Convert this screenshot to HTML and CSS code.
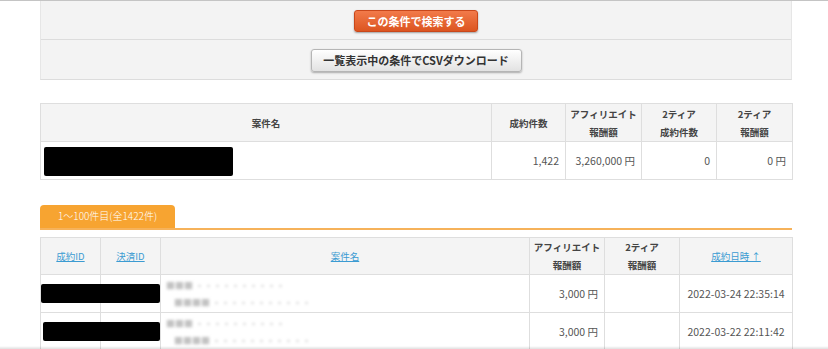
FILE: index.html
```html
<!DOCTYPE html>
<html lang="ja">
<head>
<meta charset="utf-8">
<link rel="stylesheet" href="styles.css">
</head>
<body>
<div class="topline"></div>
<div class="wrap">
  <div class="panel">
    <div class="panel-row"><button class="btn btn-orange">この条件で検索する</button></div>
    <div class="panel-row"><button class="btn btn-gray">一覧表示中の条件でCSVダウンロード</button></div>
  </div>

  <table class="tbl summary">
    <colgroup>
      <col style="width:451px"><col style="width:74px"><col style="width:76px"><col style="width:75px"><col style="width:76px">
    </colgroup>
    <thead>
      <tr>
        <th>案件名</th>
        <th>成約件数</th>
        <th>アフィリエイト<br>報酬額</th>
        <th>2ティア<br>成約件数</th>
        <th>2ティア<br>報酬額</th>
      </tr>
    </thead>
    <tbody>
      <tr>
        <td class="name"><span class="redact r1"></span></td>
        <td class="num">1,422</td>
        <td class="num">3,260,000 円</td>
        <td class="num">0</td>
        <td class="num">0 円</td>
      </tr>
    </tbody>
  </table>

  <div class="tabbar"><div class="tab">1〜100件目(全1422件)</div></div>

  <table class="tbl list">
    <colgroup>
      <col style="width:60px"><col style="width:60px"><col style="width:369px"><col style="width:75px"><col style="width:75px"><col style="width:113px">
    </colgroup>
    <thead>
      <tr>
        <th><a class="lnk">成約ID</a></th>
        <th><a class="lnk">決済ID</a></th>
        <th><a class="lnk">案件名</a></th>
        <th>アフィリエイト<br>報酬額</th>
        <th>2ティア<br>報酬額</th>
        <th><a class="lnk">成約日時 ↑</a></th>
      </tr>
    </thead>
    <tbody>
      <tr>
        <td class="idc"><span class="redact r2"></span></td>
        <td class="idc"></td>
        <td class="blur"><span class="b1">■■■ ・・・・・・・・・・</span><span class="b2">■■■■ ・・・・・・・・・・・</span></td>
        <td class="num">3,000 円</td>
        <td></td>
        <td class="date">2022-03-24 22:35:14</td>
      </tr>
      <tr>
        <td class="idc"><span class="redact r3"></span></td>
        <td class="idc"></td>
        <td class="blur"><span class="b1">■■■ ・・・・・・・・・・</span><span class="b2">■■■■ ・・・・・・・・・・・</span></td>
        <td class="num">3,000 円</td>
        <td></td>
        <td class="date">2022-03-22 22:11:42</td>
      </tr>
    </tbody>
  </table>
</div>
<div class="bottomshade"></div>
</body>
</html>
```

FILE: styles.css
```css
html, body {
  margin: 0;
  padding: 0;
  background: #fff;
  font-family: "Noto Sans CJK JP", "Noto Sans", sans-serif;
  color: #444;
  overflow: hidden;
  height: 349px;
}
.topline {
  height: 1px;
  background: #c4c4c4;
}
.wrap {
  width: 752px;
  margin-left: 40px;
  position: relative;
}
.panel {
  background: #f3f3f3;
  border-left: 1px solid #e6e6e6;
  border-right: 1px solid #e6e6e6;
  border-bottom: 1px solid #dcdcdc;
}
.panel-row {
  height: 38px;
  display: flex;
  align-items: center;
  justify-content: center;
}
.panel-row + .panel-row {
  border-top: 1px solid #dcdcdc;
  height: 39px;
}
.btn {
  font-family: "Noto Sans CJK JP", sans-serif;
  font-weight: bold;
  font-size: 11px;
  border-radius: 3px;
  padding: 0;
  cursor: pointer;
}
.btn-orange {
  width: 124px;
  height: 22px;
  margin-top: 1px;
  color: #fff;
  border: 1px solid #c9471a;
  background: linear-gradient(#f27a4a, #dc5520);
  box-shadow: 0 1px 2px rgba(0,0,0,0.35);
}
.btn-gray {
  width: 211px;
  height: 23px;
  margin-top: 1px;
  color: #333;
  border: 1px solid #b5b5b5;
  background: linear-gradient(#ffffff, #e2e2e2);
  box-shadow: 0 1px 2px rgba(0,0,0,0.3);
}
.tbl {
  border-collapse: collapse;
  table-layout: fixed;
  width: 752px;
  font-size: 10px;
}
.tbl th, .tbl td {
  border: 1px solid #dedede;
  padding: 0 6px;
  line-height: 14px;
}
.tbl th {
  background: #f4f4f4;
  font-weight: bold;
  color: #444;
  line-height: 18px;
  font-size: 9.5px;
  white-space: nowrap;
  padding: 0 2px;
}
.summary {
  margin-top: 23px;
}
.summary th { height: 37px; }
.summary td { height: 37px; }
.num {
  text-align: right;
  font-size: 10.5px;
  color: #555;
  white-space: nowrap;
}
.redact {
  display: block;
  background: #000;
  border-radius: 2px;
}
.r1 {
  width: 189px;
  height: 29px;
  margin-left: -2px;
  margin-top: 2px;
}
.tbl td.name { padding: 0 5px; }
.tabbar {
  margin-top: 25px;
  border-bottom: 2px solid #f6b25a;
  height: 23px;
  display: flex;
}
.tab {
  width: 135px;
  height: 23px;
  background: #f7a431;
  border-radius: 4px 4px 0 0;
  color: #fff;
  font-size: 10px;
  font-weight: 300;
  line-height: 22px;
  text-align: center;
}
.list {
  margin-top: 7px;
}
.list th { height: 36px; }
.list td { height: 37px; }
.lnk {
  color: #3b9bd2;
  text-decoration: underline;
  font-weight: normal;
}
.tbl td.idc {
  position: relative;
  padding: 0;
}
.redact.r2, .redact.r3 {
  position: absolute;
  left: 0;
  width: 119px;
  height: 19px;
  top: 9px;
  z-index: 2;
}
.redact.r3 {
  left: 2px;
  width: 117px;
}
.tbl td.blur {
  padding: 0;
  overflow: hidden;
}
.blur span {
  display: block;
  color: #c2c2c2;
  filter: blur(1.8px);
  font-size: 9px;
  line-height: 17px;
  white-space: nowrap;
}
.blur .b1 { margin-left: 5px; }
.blur .b2 { margin-left: 13px; }
.date {
  text-align: center;
  font-size: 10.5px;
  color: #555;
  white-space: nowrap;
}
.bottomshade {
  position: fixed;
  left: 0;
  right: 0;
  bottom: 0;
  height: 3px;
  background: linear-gradient(rgba(0,0,0,0), rgba(0,0,0,0.12));
}
```
